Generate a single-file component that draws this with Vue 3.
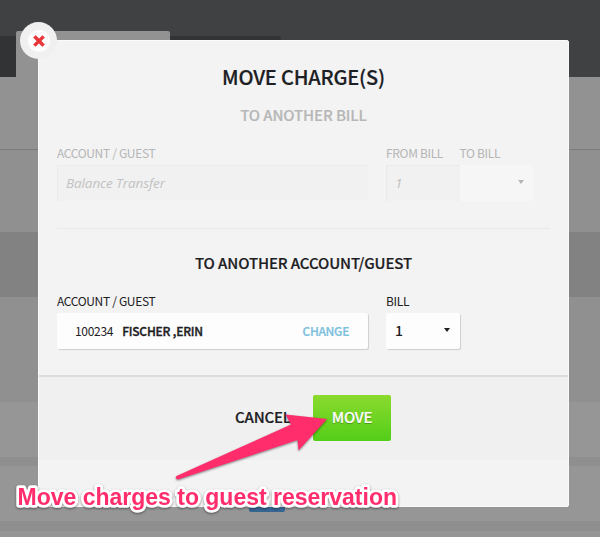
<script setup>
import { ref } from 'vue'

const bands = [
  { name: 'head', size: 77 },
  { name: 'toolbar', size: 72 },
  { name: 'content', size: 83 },
  { name: 'active', size: 65 },
  { name: 'content', size: 105 },
  { name: 'plain', size: 55 },
  { name: 'strip', size: 9 },
  { name: 'plain', size: 55 },
  { name: 'strip', size: 10 },
  { name: 'plain', size: 6 }
]

const account = ref({ number: '100234', name: 'FISCHER ,ERIN' })
const bill = ref('1')
</script>

<template>
  <div class="screen">
    <div class="backdrop">
      <div v-for="(band, i) in bands" :key="i" class="band" :class="band.name" :style="{ height: band.size + 'px' }">
        <div v-if="band.name === 'head'" class="tabs">
          <span class="tab edge"></span>
          <span class="tab current"></span>
          <span class="tab next"></span>
        </div>
      </div>
      <span class="blue-button"></span>
    </div>

    <section class="modal">
      <button class="close" aria-label="Close">
        <span class="close-inner">
          <svg width="12" height="12" viewBox="0 0 12 12">
            <path d="M2.600 2.600L9.400 9.400M9.400 2.600L2.600 9.400" stroke="#e8373a" stroke-width="3.500" stroke-linecap="square" />
          </svg>
        </span>
      </button>

      <h1>MOVE CHARGE(S)</h1>

      <div class="group disabled">
        <h2>TO ANOTHER BILL</h2>
        <div class="fields">
          <div class="field wide">
            <label>ACCOUNT / GUEST</label>
            <div class="input sunken"><i>Balance Transfer</i></div>
          </div>
          <div class="field from">
            <label>FROM BILL</label>
            <div class="input sunken"><i>1</i></div>
          </div>
          <div class="field to">
            <label>TO BILL</label>
            <div class="input select"><span class="caret"></span></div>
          </div>
        </div>
      </div>

      <div class="group enabled">
        <h2>TO ANOTHER ACCOUNT/GUEST</h2>
        <div class="fields">
          <div class="field wide">
            <label>ACCOUNT / GUEST</label>
            <div class="input raised guest">
              <span class="number">{{ account.number }}</span>
              <b>{{ account.name }}</b>
              <a>CHANGE</a>
            </div>
          </div>
          <div class="field from">
            <label>BILL</label>
            <div class="input raised bill">
              <strong>{{ bill }}</strong>
              <span class="caret"></span>
            </div>
          </div>
        </div>
      </div>

      <footer>
        <button class="cancel">CANCEL</button>
        <button class="move">MOVE</button>
      </footer>
    </section>

    <svg class="annotation" width="600" height="537" viewBox="0 0 600 537">
      <path class="arrow" d="M327 419L285.5 414.5L291 424.5L176.5 476Q174.5 479 178 479.500L297.500 440L298.500 450.500Z" />
      <text x="17.500" y="505" textLength="379.500" lengthAdjust="spacingAndGlyphs">Move charges to guest reservation</text>
    </svg>
  </div>
</template>

<style>
body {
  margin: 0;
  overflow: hidden;
}
</style>

<style scoped>
.screen {
  position: relative;
  width: 600px;
  height: 537px;
  overflow: hidden;
  font-family: "Noto Sans CJK SC", "Open Sans", sans-serif;
  color: #1c2023;
}

.backdrop {
  position: absolute;
  inset: 0;
}

.band {
  box-sizing: border-box;
}

.head {
  background: #404143;
}

.toolbar {
  background: #929292;
}

.content {
  background: #909090;
}

.toolbar + .content {
  border-top: 1px solid #7b7b7b;
}

.active {
  background: #828282;
}

.plain {
  background: #969696;
}

.strip {
  background: #8f8f8f;
}

.tabs {
  display: flex;
  align-items: flex-end;
  height: 77px;
}

.tab {
  height: 41px;
  background: #323335;
}

.edge {
  width: 16px;
}

.current {
  width: 154px;
  height: 46px;
  background: #929292;
  border-radius: 2px 2px 0 0;
}

.next {
  width: 111px;
  border-radius: 0 3px 0 0;
}

.blue-button {
  position: absolute;
  left: 249px;
  top: 490px;
  width: 36px;
  height: 22px;
  background: #376592;
  border-radius: 2px;
}

.modal {
  position: absolute;
  left: 38px;
  top: 40px;
  width: 531px;
  height: 467px;
  box-sizing: border-box;
  border: 1px solid #fafafa;
  border-radius: 2px;
  background: #f3f3f3;
}

.close {
  position: absolute;
  left: -19px;
  top: -19px;
  width: 37px;
  height: 37px;
  padding: 0;
  border: 0;
  border-radius: 50%;
  background: #f0f0f0;
  display: flex;
  align-items: center;
  justify-content: center;
}

.close-inner {
  width: 22px;
  height: 22px;
  border-radius: 50%;
  background: #fdfdfd;
  display: flex;
  align-items: center;
  justify-content: center;
}

h1 {
  margin: 21px 0 0;
  height: 31px;
  line-height: 30px;
  font-size: 20px;
  font-weight: 500;
  letter-spacing: -0.2px;
  text-align: center;
  -webkit-text-stroke: 0.2px;
}

h2 {
  margin: 0;
  height: 22px;
  line-height: 22px;
  font-size: 15px;
  font-weight: 500;
  letter-spacing: -0.12px;
  text-align: center;
  -webkit-text-stroke: 0.2px;
}

.group {
  margin: 0 18px;
}

.disabled {
  padding-top: 11px;
  height: 124px;
  border-bottom: 1px solid #e8e8e8;
  color: #b5b5b5;
}

.disabled h2 {
  color: #b7b7b7;
}

.enabled {
  height: 123px;
  padding-top: 23px;
}

.fields {
  display: flex;
  margin-top: 16px;
}

.field {
  width: 73.5px;
}

.wide {
  width: 311px;
  margin-right: 18px;
}

label {
  display: block;
  height: 22px;
  line-height: 22px;
  font-size: 12px;
  letter-spacing: -0.33px;
  white-space: nowrap;
}

.input {
  display: flex;
  align-items: center;
  box-sizing: border-box;
  height: 36px;
  margin-top: 1px;
  padding-bottom: 2px;
  font-size: 14px;
}

.sunken {
  padding-left: 8px;
  padding-bottom: 2px;
  background: #f1f1f1;
  border-top: 1px solid #eaeaea;
  border-left: 1px solid #eaeaea;
  color: #c2c2c2;
}

.sunken i {
  font-family: "Open Sans", sans-serif;
  font-size: 13.5px;
  letter-spacing: -0.1px;
}

.select {
  background: #f6f6f6;
}

.caret {
  width: 0;
  height: 0;
  margin-left: auto;
  margin-right: 9px;
  border: 3px solid transparent;
  border-top: 4px solid currentColor;
  border-bottom: 0;
}

.raised {
  background: #fdfdfd;
  border-radius: 2px;
  box-shadow: 1px 1px 1px #cfcfcf;
}

.guest {
  padding-left: 18px;
  padding-right: 19px;
  font-size: 12px;
}

.number {
  letter-spacing: -0.3px;
}

.guest b {
  margin-left: 9px;
  font-weight: 500;
  letter-spacing: -0.2px;
  -webkit-text-stroke: 0.35px;
}

.guest a {
  margin-left: auto;
  color: #7bc0dc;
  font-weight: 500;
  letter-spacing: -0.35px;
  -webkit-text-stroke: 0.2px;
}

.bill {
  padding-left: 9px;
}

.bill .caret {
  margin-right: 10px;
}

.bill strong {
  font-weight: 500;
}

footer {
  display: flex;
  align-items: flex-start;
  gap: 22px;
  box-sizing: border-box;
  height: 85px;
  padding-top: 18px;
  padding-left: 196px;
  border-top: 2px solid #dcdcdc;
  background: #f0f0f0;
}

footer button {
  height: 46px;
  padding: 0;
  border: 0;
  background: none;
  font: 500 15px/44px "Noto Sans CJK SC", sans-serif;
  letter-spacing: -0.2px;
  color: #1c2023;
  -webkit-text-stroke: 0.2px;
}

footer .cancel {
  width: 56px;
  padding-bottom: 2px;
  white-space: nowrap;
}

footer .move {
  width: 78px;
  padding-bottom: 2px;
  border-radius: 2px;
  background: linear-gradient(#8bda2e, #53ce18);
  color: #fdfdfd;
  text-shadow: 0 1px 1px rgba(0, 0, 0, 0.3);
}

.annotation {
  position: absolute;
  left: 0;
  top: 0;
}

.annotation text {
  font: bold 23px "Liberation Sans", Arial, sans-serif;
  fill: #ff2d6c;
  stroke: #fff;
  stroke-width: 5.5px;
  stroke-linejoin: round;
  paint-order: stroke;
  filter: drop-shadow(0 1px 1px rgba(0, 0, 0, 0.45));
}

.arrow {
  fill: #ff2d6c;
  filter: drop-shadow(0 1px 1px rgba(0, 0, 0, 0.45));
}
</style>
